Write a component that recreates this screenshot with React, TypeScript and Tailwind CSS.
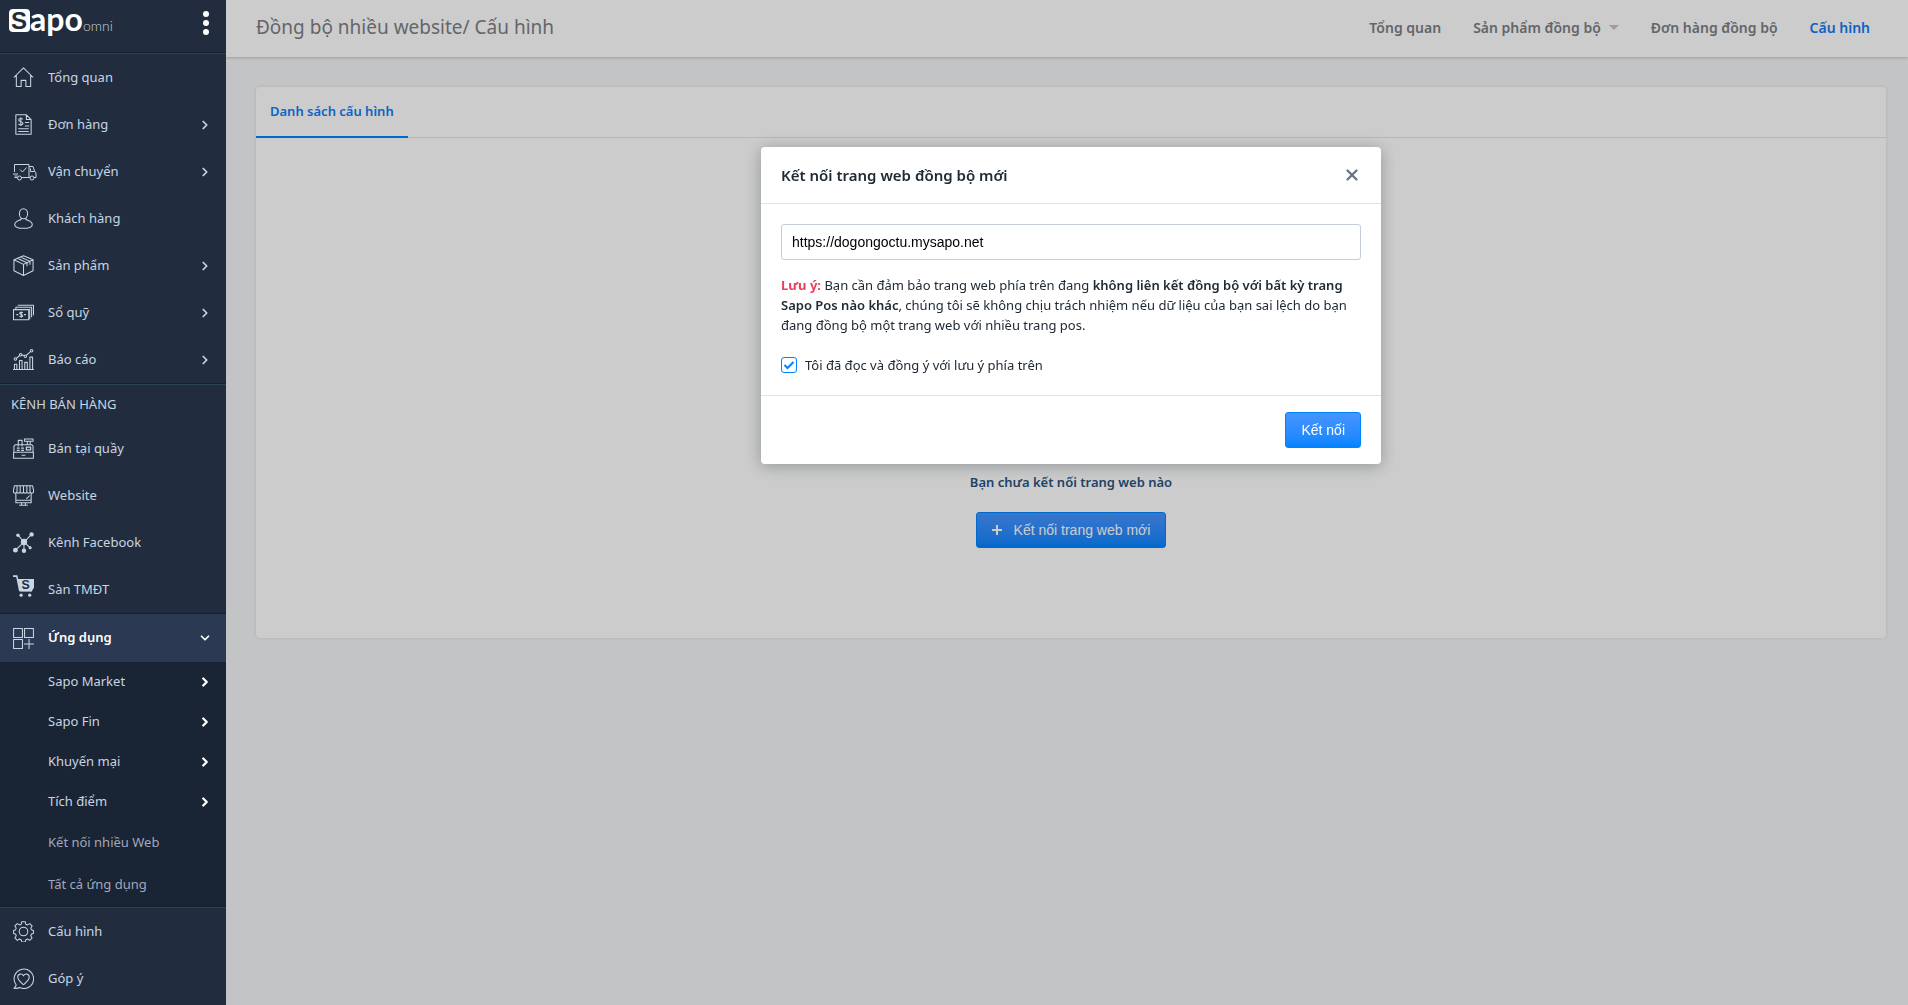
import { useState } from 'react';
import type { ReactNode } from 'react';
import { ChevronDown, ChevronRight, X } from 'lucide-react';

type NavItem = {
  label: string;
  icon: ReactNode;
  expandable?: boolean;
};

function Icon({ children }: { children: ReactNode }) {
  return (
    <svg
      viewBox="0 0 22 22"
      className="h-[21px] w-[21px] shrink-0"
      fill="none"
      stroke="currentColor"
      strokeWidth="1.1"
      strokeLinejoin="round"
      aria-hidden="true"
    >
      {children}
    </svg>
  );
}

const icons = {
  home: (
    <Icon>
      <path d="M.8 11 11 1l10.200 10M3.500 8.500v12h5v-6.500h5v6.500h5v-12" />
    </Icon>
  ),
  order: (
    <Icon>
      <path d="M3 .8h11l5 5v15.400H3zM14 .8v5h5" />
      <path d="M10.300 5.600C9.800 4.300 6 4.300 6 6.300c0 2.200 4.500 1.200 4.500 3.500 0 2.200-4 2.200-4.800.5M8.200 3.500v9M12.500 9H17M12.500 12.500H17M5.500 15.500h11M5.500 18.300h11" />
    </Icon>
  ),
  truck: (
    <svg
      viewBox="0 0 24 18"
      className="h-[18px] w-6 shrink-0"
      fill="none"
      stroke="currentColor"
      strokeWidth="1"
      strokeLinejoin="round"
      aria-hidden="true"
    >
      <path d="M1.500 9V1.500h14.500v13M16 3.500h4l1.500 4.500 1.500 2v4.500h-2M1.500 14.500h2.500M8.500 14.500h8.500M0 11h5M1.500 13h3M17.500 5.500v3h4M7 6.500l2.500 2.500 4-4.500" />
      <circle cx="6.500" cy="15" r="2" />
      <circle cx="19" cy="15" r="2" />
    </svg>
  ),
  customer: (
    <Icon>
      <ellipse cx="11" cy="6" rx="4.300" ry="5.300" />
      <path d="M8.500 10.500v1.500c-3 1.500-6.700 2-6.700 5.500 0 2.500 3.500 3.800 9.200 3.800s9.200-1.300 9.200-3.800c0-3.500-3.700-4-6.700-5.500v-1.500" />
    </Icon>
  ),
  product: (
    <Icon>
      <path d="M11 .7 21 5v11.500l-10 5-10-5V5zM1 5l10 4.800L21 5M11 9.800v11.700M4.500 3.500l10.200 4.700v3.500M7.800 2.200l10 4.500v3.500" />
    </Icon>
  ),
  cash: (
    <Icon>
      <path d="M.5 8h16v10.500H.5zM3 8V5.500h16.500V16M5 3.500h16.500V14" />
      <path d="M17.500 7v11M3.500 13.200h2M11.500 13.200h2M10.200 11.500c-.6-1-3.200-1-3.200.4s3.200.9 3.200 2.400-2.800 1.500-3.400.3M8.600 10v6.500" />
    </Icon>
  ),
  report: (
    <Icon>
      <path d="M0 21.500h22M1.500 21.500V16H4v5.500M6.800 21.500V12h2.700v9.500M12.300 21.500V14H15v7.500M17.700 21.500V8.500h2.800v13M3.500 9.800 7 6.800M9 6l3 1M14 6.800l4.500-4.300" />
      <circle cx="2.500" cy="10.500" r="1.300" />
      <circle cx="8" cy="6" r="1.300" />
      <circle cx="13" cy="7.500" r="1.300" />
      <circle cx="19.500" cy="1.900" r="1.300" />
    </Icon>
  ),
  register: (
    <Icon>
      <path d="M1 15V8.500l1.500-1.500h17L21 8.500V15M.6 15h20.800v6.200H.6zM5.500 9V2.500h4V9M12 1h9v2.500h-9zM15 3.500V7M18 3.500V7M9 18h4" />
      <path d="M4 10.500h3M8.500 10.500h3M4 13h3M8.500 13h3M14 9.500h4.500v3H14z" strokeWidth="1.300" />
    </Icon>
  ),
  store: (
    <Icon>
      <path d="M1.500.8h19l1 4.500V7c0 2-3.500 2-3.500 0 0 2-3.500 2-3.500 0 0 2-3.500 2-3.500 0 0 2-3.500 2-3.500 0 0 2-3.500 2-3.500 0 0 2-3.500 2-3.500 0V5.300zM4.200 1v6M7.500 1v6M11 1v6M14.500 1v6M17.800 1v6M3 9v9.500h16V9M3 16h16M9 18.500V21M13 18.500V21M6.500 21.300h9M14 14.500l3.500-3.500" />
    </Icon>
  ),
  network: (
    <Icon>
      <path d="M11.500 10.500 5.500 3.500M11.500 10.500l8-8M11.500 10.500l-9 8.500M11.500 10.500V19M11.500 10.500l6.500 6" />
      <g fill="currentColor" stroke="none">
        <circle cx="11.500" cy="10.500" r="3.300" />
        <circle cx="5.200" cy="3.500" r="1.800" />
        <circle cx="19.500" cy="2.500" r="2.300" />
        <circle cx="2.500" cy="19" r="2.500" />
        <circle cx="11.500" cy="19.700" r="2.300" />
        <circle cx="18" cy="16.500" r="1.600" />
      </g>
    </Icon>
  ),
  cart: (
    <svg viewBox="0 0 22 30" className="h-[29px] w-[21px] shrink-0" fill="none" stroke="currentColor" aria-hidden="true">
      <path d="M0 1h4l3 15h13" strokeWidth="1.600" />
      <path d="M5 4h17v9l-2.500 4H7.500z" fill="currentColor" stroke="none" />
      <circle cx="8.500" cy="21" r="1.700" fill="currentColor" stroke="none" />
      <circle cx="17.500" cy="21" r="1.700" fill="currentColor" stroke="none" />
      <text
        x="9"
        y="15"
        fontSize="13"
        className="fill-[#212d3e] font-['Liberation_Sans',sans-serif] font-bold"
        stroke="none"
      >
        S
      </text>
    </svg>
  ),
  apps: (
    <Icon>
      <path d="M.6.600h9.300v9.300H.6zM12.100.600h9.300v9.300h-9.300zM.6 12.100h9.300v9.300H.6zM16.800 11.500v10.500M11.500 16.800h10.500" />
    </Icon>
  ),
  settings: (
    <Icon>
      <circle cx="11" cy="11" r="4.500" />
      <path d="M9.200.7h3.600l.6 2.600 1.800.8 2.300-1.400 2.500 2.500-1.400 2.300.8 1.800 2 .6v3.200l-2 .6-.8 1.800 1.400 2.300-2.500 2.500-2.300-1.400-1.800.8-.6 2.300H9.200l-.6-2.300-1.800-.8-2.300 1.400L2 17.800l1.400-2.300-.8-1.800L.6 13.100V9.900l2-.6.8-1.800L2 5.200l2.500-2.500 2.300 1.400 1.800-.8z" />
    </Icon>
  ),
  feedback: (
    <Icon>
      <path d="M3.300 17.500A10.200 10.200 0 1 1 7 20.500c-1.500.8-4 1-6 .7 1-.8 2.300-2 2.300-3.700z" />
      <path d="M11 17.500c-3-2.500-6-4.800-6-8 0-3.500 4.500-4.300 6-1.300 1.500-3 6-2.200 6 1.300 0 3.200-3 5.500-6 8z" />
    </Icon>
  ),
};

const mainItems: NavItem[] = [
  { label: 'Tổng quan', icon: icons.home },
  { label: 'Đơn hàng', icon: icons.order, expandable: true },
  { label: 'Vận chuyển', icon: icons.truck, expandable: true },
  { label: 'Khách hàng', icon: icons.customer },
  { label: 'Sản phẩm', icon: icons.product, expandable: true },
  { label: 'Sổ quỹ', icon: icons.cash, expandable: true },
  { label: 'Báo cáo', icon: icons.report, expandable: true },
];

const channelItems: NavItem[] = [
  { label: 'Bán tại quầy', icon: icons.register },
  { label: 'Website', icon: icons.store },
  { label: 'Kênh Facebook', icon: icons.network },
  { label: 'Sàn TMĐT', icon: icons.cart },
];

const footerItems: NavItem[] = [
  { label: 'Cấu hình', icon: icons.settings },
  { label: 'Góp ý', icon: icons.feedback },
];

const appGroups = ['Sapo Market', 'Sapo Fin', 'Khuyến mại', 'Tích điểm'];
const appLinks = ['Kết nối nhiều Web', 'Tất cả ứng dụng'];

function Divider() {
  return <div className="h-0.5 shrink-0 border-b border-[#2a4156] bg-[#17212e]" />;
}

function Logo() {
  return (
    <svg viewBox="0 0 110 40" className="h-10 w-[110px] overflow-visible" role="img" aria-label="Sapo omni">
      <rect x="1" y="2" width="21" height="23" rx="4" fill="white" />
      <text
        x="3"
        y="22"
        fontSize="24"
        className="fill-[#212d3e] font-['Liberation_Sans',Arial,sans-serif] font-bold"
      >
        S
      </text>
      <text x="22" y="24" fontSize="32" className="fill-white font-['Lato',sans-serif] font-bold">
        apo
      </text>
      <text x="75" y="24" fontSize="14" className="fill-[#c5ced8] font-['Lato',sans-serif] font-light">
        omni
      </text>
    </svg>
  );
}

function NavLinks({ items }: { items: NavItem[] }) {
  return (
    <ul>
      {items.map((item) => (
        <li key={item.label}>
          <a href="#" className="flex h-[47px] items-center px-[13px] text-[#c8d5e3]">
            <span className="flex w-[35px] items-center">{item.icon}</span>
            <span className="flex-1">{item.label}</span>
            {item.expandable && <ChevronRight className="mr-px h-3.5 w-3.5" strokeWidth={3} />}
          </a>
        </li>
      ))}
    </ul>
  );
}

function Sidebar() {
  return (
    <aside className="relative z-20 flex w-[226px] shrink-0 flex-col bg-[#212d3e] text-[13px]">
      <div className="flex h-[52px] shrink-0 items-start justify-between pt-[7px] pr-[17px] pl-2">
        <Logo />
        <button type="button" aria-label="Menu" className="flex flex-col gap-[3px] pt-1">
          <span className="h-1.5 w-1.5 rounded-full bg-white" />
          <span className="h-1.5 w-1.5 rounded-full bg-white" />
          <span className="h-1.5 w-1.5 rounded-full bg-white" />
        </button>
      </div>
      <Divider />
      <nav>
        <NavLinks items={mainItems} />
        <Divider />
        <h2 className="flex h-10 items-center pl-[11px] text-[#c8d5e3]">KÊNH BÁN HÀNG</h2>
        <NavLinks items={channelItems} />
        <button
          type="button"
          className="flex h-[49px] w-full items-center border-t border-[#17212e] bg-[#2b3a52] px-[13px] text-left font-semibold text-white"
        >
          <span className="w-[35px] text-[#c8d5e3]">{icons.apps}</span>
          <span className="flex-1">Ứng dụng</span>
          <ChevronDown className="mr-px h-3.5 w-3.5" strokeWidth={3} />
        </button>
        <ul className="bg-[#192434]">
          {appGroups.map((label) => (
            <li key={label}>
              <a href="#" className="flex h-10 items-center justify-between pr-[14px] pl-12 text-[#c8d5e3]">
                {label}
                <ChevronRight className="h-3.5 w-3.5 text-white" strokeWidth={4} />
              </a>
            </li>
          ))}
          {appLinks.map((label) => (
            <li key={label}>
              <a href="#" className="flex h-[42px] items-center pl-12 text-[#a3a7bb]">
                {label}
              </a>
            </li>
          ))}
        </ul>
        <Divider />
        <NavLinks items={footerItems} />
      </nav>
    </aside>
  );
}

function TopBar() {
  return (
    <header className="flex h-[57px] items-center justify-between bg-white pr-[38px] pb-0.5 pl-[30px] shadow-[0_1px_3px_rgba(0,0,0,0.2)]">
      <h1 className="text-[19px] text-[#7d7f86]">Đồng bộ nhiều website/ Cấu hình</h1>
      <nav className="flex items-center gap-8 text-sm font-semibold text-[#7d7f86]">
        <a href="#">Tổng quan</a>
        <a href="#" className="flex items-center gap-2">
          Sản phẩm đồng bộ
          <span className="border-x-[5px] border-t-[5px] border-x-transparent border-t-[#c4c4c4]" />
        </a>
        <a href="#">Đơn hàng đồng bộ</a>
        <a href="#" className="text-[#0e7cf5]">
          Cấu hình
        </a>
      </nav>
    </header>
  );
}

function ConfigCard() {
  return (
    <section className="rounded bg-white shadow-[0_0_4px_rgba(0,0,0,0.1)]">
      <div className="flex h-[51px] border-b border-[#e3e5e8]">
        <a
          href="#"
          className="flex h-[51px] items-center border-b-2 border-[#0084ff] px-[14px] text-[13px] font-semibold text-[#0e7cf5]"
        >
          Danh sách cấu hình
        </a>
      </div>
      <div className="flex h-[500px] flex-col items-center gap-5 pt-[334px]">
        <p className="text-[13px] leading-5 font-semibold text-[#27547f]">Bạn chưa kết nối trang web nào</p>
        <button
          type="button"
          className="flex h-9 items-center gap-3 rounded-[3px] border border-[#0084ff] bg-linear-to-b from-[#4695ff] to-[#0084ff] px-[15px] font-['Liberation_Sans',Arial,sans-serif] text-sm text-white"
        >
          <svg viewBox="0 0 10 10" className="h-2.5 w-2.5" stroke="currentColor" strokeWidth="2" aria-hidden="true">
            <path d="M5 0v10M0 5h10" />
          </svg>
          Kết nối trang web mới
        </button>
      </div>
    </section>
  );
}

function ConnectModal() {
  const [url, setUrl] = useState('https://dogongoctu.mysapo.net');
  const [agreed, setAgreed] = useState(true);

  return (
    <div className="fixed inset-0 z-10 flex items-start justify-center bg-black/20 pt-[147px] pr-[22px] pl-[256px]">
      <div
        role="dialog"
        aria-labelledby="modal-title"
        className="w-full max-w-[620px] rounded bg-white text-[13px] text-[#212b35] shadow-[0_2px_16px_rgba(33,43,54,0.35)]"
      >
        <div className="flex h-[57px] items-center justify-between border-b border-[#dfe3e8] px-5">
          <h2 id="modal-title" className="text-[15px] font-semibold">
            Kết nối trang web đồng bộ mới
          </h2>
          <button type="button" aria-label="Đóng" className="text-[#697386]">
            <X className="h-[18px] w-[18px]" strokeWidth={3} />
          </button>
        </div>
        <div className="border-b border-[#dfe3e8] p-5">
          <input
            type="text"
            aria-label="Địa chỉ trang web"
            value={url}
            onChange={(e) => setUrl(e.target.value)}
            className="h-9 w-full rounded-[3px] border border-[#c4cdd9] px-2.5 font-['Liberation_Sans',Arial,sans-serif] text-sm text-black"
          />
          <p className="mt-[15px] leading-5">
            <strong className="font-bold text-[#ee3d5c]">Lưu ý:</strong> Bạn cần đảm bảo trang web phía trên đang{' '}
            <strong className="font-semibold">không liên kết đồng bộ với bất kỳ trang Sapo Pos nào khác</strong>, chúng
            tôi sẽ không chịu trách nhiệm nếu dữ liệu của bạn sai lệch do bạn đang đồng bộ một trang web với nhiều trang
            pos.
          </p>
          <label className="mt-5 flex items-center gap-2 leading-5">
            <span className="grid h-4 w-4">
              <input
                type="checkbox"
                checked={agreed}
                onChange={(e) => setAgreed(e.target.checked)}
                className="peer col-start-1 row-start-1 h-4 w-4 appearance-none rounded-[3px] border border-[#0084ff] bg-white"
              />
              <svg
                viewBox="0 0 16 16"
                className="pointer-events-none col-start-1 row-start-1 hidden h-4 w-4 peer-checked:block"
                fill="none"
                stroke="#0084ff"
                strokeWidth="2"
                aria-hidden="true"
              >
                <path d="M3.500 8l3 3 6-6" />
              </svg>
            </span>
            Tôi đã đọc và đồng ý với lưu ý phía trên
          </label>
        </div>
        <div className="flex justify-end px-5 py-4">
          <button
            type="button"
            className="h-9 rounded-[3px] border border-[#0084ff] bg-linear-to-b from-[#4695ff] to-[#0084ff] px-[15px] font-['Liberation_Sans',Arial,sans-serif] text-sm text-white"
          >
            Kết nối
          </button>
        </div>
      </div>
    </div>
  );
}

export default function App() {
  return (
    <div className="flex min-h-screen bg-[#f4f6f8] font-['Noto_Sans','Open_Sans',sans-serif]">
      <Sidebar />
      <div className="min-w-0 flex-1">
        <TopBar />
        <main className="pt-[30px] pr-[22px] pl-[30px]">
          <ConfigCard />
        </main>
      </div>
      <ConnectModal />
    </div>
  );
}
